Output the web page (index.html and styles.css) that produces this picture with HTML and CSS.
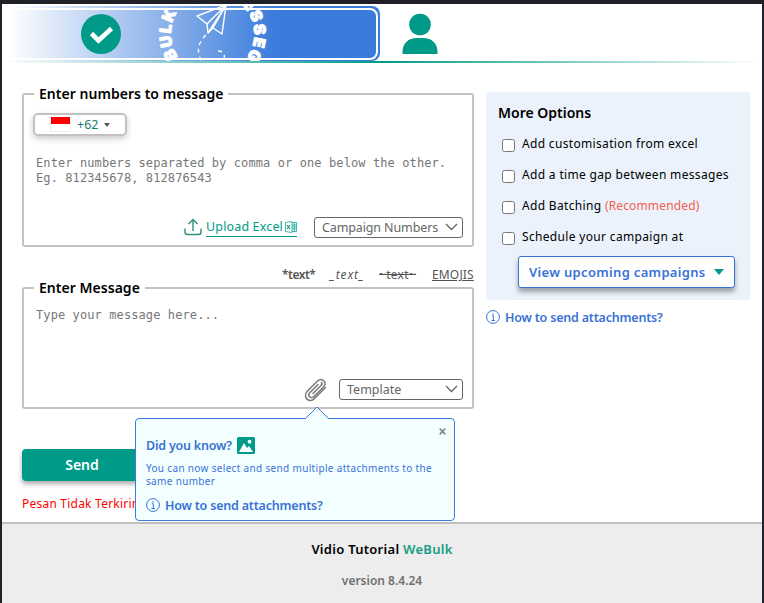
FILE: index.html
```html
<!DOCTYPE html>
<html lang="en">
<head>
<meta charset="utf-8">
<title>WeBulk</title>
<link rel="stylesheet" href="styles.css">
</head>
<body>
<div class="page">
  <header class="banner">
    <svg width="760" height="59" viewBox="2 4 760 59">
      <defs>
        <linearGradient id="blue" gradientUnits="userSpaceOnUse" x1="8" y1="0" x2="276" y2="0"><stop offset="0" stop-color="#fff"/><stop offset="1" stop-color="#3a7bdb"/></linearGradient>
        <linearGradient id="line" gradientUnits="userSpaceOnUse" x1="2" y1="0" x2="760" y2="0"><stop offset="0" stop-color="#009b88" stop-opacity="0"/><stop offset=".5" stop-color="#009b88"/><stop offset="1" stop-color="#009b88" stop-opacity="0"/></linearGradient>
        <clipPath id="clip"><rect x="2" y="6" width="378" height="55"/></clipPath>
        <path id="left" d="M178 57A41.500 41.500 0 0 1 190 -1"/>
        <path id="right" d="M241.600 4.300A41.500 41.500 0 0 1 235 69"/>
      </defs>
      <path d="M2 6H372a8 8 0 0 1 8 8V53a8 8 0 0 1-8 8H2z" fill="url(#blue)"/>
      <path d="M2 9H370a7 7 0 0 1 7 7V52a7 7 0 0 1-7 7H2" fill="none" stroke="#fff" stroke-width="2"/>
      <g clip-path="url(#clip)" fill="none" stroke="#fff" stroke-width="1.4" stroke-linejoin="round">
        <path d="M226 5L197 16L207 24L208 33L213 28L222 34Z"/>
        <path d="M226 5L207 24M226 5L208 33M226 5L213 28"/>
        <path d="M206 35Q192 48 204 65M218 51Q226 51 224 59" stroke-dasharray="4 4"/>
        <g class="ring-text"><text class="ring-left"><textPath href="#left">BULK</textPath></text><text class="ring-right"><textPath href="#right">ESSEG</textPath></text></g>
      </g>
      <circle cx="101" cy="34" r="20" fill="#009b88"/>
      <path d="M91.500 33.500L98.500 40.500L111.500 28.500" fill="none" stroke="#fff" stroke-width="4.600"/>
      <circle cx="420" cy="24.500" r="10.800" fill="#009b88"/>
      <path d="M402.500 54V52C402.500 43 409 38 416 38H424C431 38 437.500 43 437.500 52V54Z" fill="#009b88"/>
      <rect x="2" y="61" width="760" height="2" fill="url(#line)"/>
    </svg>
  </header>

  <main class="content">
    <div class="form">
      <fieldset class="box numbers">
        <legend class="strong">Enter numbers to message</legend>
        <button class="country"><span class="flag"></span><span class="code">+62</span><span class="caret"></span></button>
        <p class="entry entry-numbers">Enter numbers separated by comma or one below the other.<br>Eg. 812345678, 812876543</p>
        <div class="actions">
          <svg class="upload" width="18" height="18" viewBox="0 0 18 18" fill="none" stroke="#328e7d" stroke-width="1.400"><path d="M9 13V2M4.500 6L9 1.500L13.500 6M1 10.500V14Q1 16.500 3.500 16.500H14.500Q17 16.500 17 14V10.500"/></svg>
          <a class="upload-link"><span>Upload Excel</span><svg width="12" height="12" viewBox="0 0 12 12" fill="none" stroke="#009b88" stroke-width=".7"><path d="M.5 1.500L7 .5V11.500L.5 10.500ZM7 1.500H11.500V10.500H7M7 4H11.500M7 6H11.500M7 8H11.500M9.300 1.500V10.500"/><path stroke-width="1.100" d="M2 4L5 8M5 4L2 8"/></svg></a>
          <div class="select campaign"><span>Campaign Numbers</span><svg width="13" height="8" viewBox="0 0 13 8"><path d="M1 1L6.500 6.500L12 1"/></svg></div>
        </div>
      </fieldset>
      <div class="formats"><b>*text*</b><i>_text_</i><s>~text~</s><u>EMOJIS</u></div>
      <fieldset class="box message">
        <legend class="strong">Enter Message</legend>
        <p class="entry entry-message">Type your message here...</p>
        <div class="actions">
          <svg class="clip" width="23" height="24" viewBox="0 0 23 24" fill="none" stroke="#777" stroke-width="1.500" stroke-linecap="round"><path d="M21.500 9.500L10.500 20.500C7 24 2 22.500 1.500 18C1.300 16 2 14.500 3.500 13L13 3.500C15.500 1 18 .8 20 3C22 5 21 7.500 19 9.500L10 18.500C8.500 20 6.500 19.800 5.500 18.800C4.300 17.500 4.500 16 6 14.500L14 6.500M17.500 4.500C18.500 5.500 18 6.500 17 7.500L9 15.500"/></svg>
          <div class="select template"><span>Template</span><svg width="13" height="8" viewBox="0 0 13 8"><path d="M1 1L6.500 6.500L12 1"/></svg></div>
        </div>
      </fieldset>
      <button class="send">Send</button>
      <p class="failed">Pesan Tidak Terkirim</p>
      <div class="tip">
        <svg class="pointer" width="24" height="13" viewBox="0 0 24 13"><path d="M0 13L12 1L24 13" fill="#f3ffff" stroke="#3a7bdb"/></svg>
        <svg class="close" width="7" height="7" viewBox="0 0 7 7"><path d="M.7 .7L6.300 6.300M6.300 .7L.7 6.300" stroke="#888" stroke-width="1.700"/></svg>
        <h3><span>Did you know?</span><svg width="18" height="17" viewBox="0 0 18 17"><rect width="18" height="17" rx="1.500" fill="#009b88"/><circle cx="12.500" cy="4.700" r="1.900" fill="#fff"/><path d="M2 15L7 6L10 11L12 9L16 15Z" fill="#fff"/></svg></h3>
        <p>You can now select and send multiple attachments to the<br>same number</p>
        <a class="help"><svg width="14" height="14" viewBox="0 0 14 14"><circle cx="7" cy="7" r="6.400"/><path d="M5.800 5.700H7.300V10.500M5.500 10.500H9M7 3V4.500"/></svg><span>How to send attachments?</span></a>
      </div>
    </div>

    <aside class="side">
      <section class="options">
        <h2>More Options</h2>
        <label><input type="checkbox"><span>Add customisation from excel</span></label>
        <label><input type="checkbox"><span>Add a time gap between messages</span></label>
        <label><input type="checkbox"><span>Add Batching <em>(Recommended)</em></span></label>
        <label><input type="checkbox"><span>Schedule your campaign at</span></label>
        <button class="upcoming"><span>View upcoming campaigns</span><i></i></button>
      </section>
      <a class="help"><svg width="14" height="14" viewBox="0 0 14 14"><circle cx="7" cy="7" r="6.400"/><path d="M5.800 5.700H7.300V10.500M5.500 10.500H9M7 3V4.500"/></svg><span>How to send attachments?</span></a>
    </aside>
  </main>
  <footer class="footer"><p class="tutorial">Vidio Tutorial <span>WeBulk</span></p><p class="version">version 8.4.24</p></footer>
</div>
</body>
</html>
```
FILE: styles.css
```css
* { box-sizing: border-box; }
body { margin: 0; padding: 4px 2px 0; height: 603px; overflow: hidden; background: #202126; font-family: "Noto Sans", sans-serif; font-size: 12px; color: #000; }
p, h2, h3 { margin: 0; }
button { font-family: inherit; padding: 0; }
span { white-space: nowrap; }
.page { height: 599px; background: #fff; display: flex; flex-direction: column; }
.banner { height: 59px; flex: none; }
.banner svg { display: block; }
.ring-text { font: 900 16px Inter, sans-serif; fill: #fff; stroke: #fff; stroke-width: .9px; }
.ring-left { letter-spacing: 1.200px; }
.ring-right { letter-spacing: 1.500px; }
.content { height: 459px; flex: none; display: flex; gap: 12px; padding: 21px 12px 0 20px; }
.form { width: 452px; position: relative; }
.box { margin: 0; min-width: 0; border: 2px solid #c2c2c2; border-radius: 3px; padding: 0 9px 0 10px; }
.numbers { height: 163px; }
.message { height: 131px; margin-top: -7px; }
legend { height: 20px; line-height: 20px; padding: 0 5px; font-size: 14px; font-weight: 600; letter-spacing: .03px; }
.country { display: flex; align-items: center; width: 94px; height: 23px; margin: 9px 0 0 -1px; padding-left: 15px; background: #fff; border: 2px solid #c2c2c2; border-radius: 5px; box-shadow: 0 3px 6px #0003; }
.flag { width: 21px; height: 15px; border: 1px solid #eee; border-top: 0; background: linear-gradient(red 50%, #fff 50%); }
.code { margin-left: 6px; font-size: 12.500px; color: #16806f; }
.caret { margin-left: 6px; border: 3px solid transparent; border-top: 4px solid #555; border-bottom: 0; }
.entry { font: 12px/15px "DejaVu Sans Mono", monospace; letter-spacing: .1px; color: #777; margin-left: 2px; white-space: nowrap; }
.entry-numbers { margin-top: 20px; }
.entry-message { margin-top: 10px; height: 15px; }
.actions { display: flex; align-items: center; justify-content: flex-end; }
.numbers .actions { height: 22px; margin-top: 30px; }
.message .actions { height: 24px; margin-top: 54px; }
.upload { margin-right: 4px; }
.upload-link { display: flex; align-items: center; width: 91px; height: 19px; margin-right: 17px; border-bottom: 1px solid #009b88; color: #009b88; font-size: 12.500px; letter-spacing: .15px; }
.upload-link svg { margin-left: auto; }
.select { display: flex; align-items: center; justify-content: space-between; height: 21px; border: 1px solid #666; border-radius: 3px; padding: 0 4px 0 7px; font-size: 12.500px; color: #666; background: #fff; }
.select path { fill: none; stroke: #666; stroke-width: 1.300; }
.campaign { width: 149px; letter-spacing: -.12px; }
.template { width: 124px; }
.clip { margin-right: 12px; position: relative; top: 1px; }
.formats { height: 20px; margin-top: 18px; display: flex; justify-content: flex-end; gap: 15px; line-height: 20px; color: #555; }
.formats b { width: 33px; font-weight: 600; letter-spacing: -.5px; }
.formats i { width: 34px; letter-spacing: .9px; }
.formats s { width: 38px; letter-spacing: .3px; }
.formats u { width: 42px; letter-spacing: .15px; }
.send { display: block; width: 120px; height: 32px; margin-top: 40px; padding-bottom: 1px; background: #009b88; color: #fff; border: 0; border-radius: 4px; font-size: 14px; font-weight: 600; box-shadow: 0 3px 5px #0005; }
.failed { margin-top: 14px; line-height: 18px; color: red; white-space: nowrap; letter-spacing: .22px; }
.tip { position: absolute; left: 113px; top: 334px; width: 320px; height: 103px; border: 1px solid #3a7bdb; border-radius: 4px; background: #f3ffff; padding: 16px 10px 0; color: #3a72d6; }
.pointer { position: absolute; left: 169px; top: -13px; }
.close { position: absolute; right: 8px; top: 9px; }
.tip h3 { display: flex; align-items: center; gap: 5px; height: 20px; font-size: 12.500px; font-weight: 600; letter-spacing: -.22px; }
.tip p { margin-top: 7px; font-size: 10px; line-height: 13px; letter-spacing: .33px; white-space: nowrap; }
.tip .help { margin-top: 8px; }
.help { display: flex; align-items: center; gap: 5px; height: 18px; color: #3a72d6; font-size: 12.500px; font-weight: 600; letter-spacing: -.2px; }
.help path, .help circle { fill: none; stroke: #3a72d6; stroke-width: 1; }
.side { width: 264px; padding-top: 8px; }
.options { height: 208px; padding: 11px 12px 0; border-radius: 4px; background: #ebf2fb; }
h2 { height: 20px; line-height: 20px; font-size: 14px; font-weight: 600; margin-bottom: 6px; }
label { display: flex; height: 31px; padding: 5px 0 0 4px; line-height: 20px; letter-spacing: .33px; }
label input { width: 13px; height: 13px; margin: 5px 7px 0 0; }
label em { font-style: normal; color: #f55f50; letter-spacing: .15px; }
.upcoming { display: flex; align-items: center; justify-content: space-between; width: 217px; height: 32px; margin: 3px 0 0 20px; padding: 0 10px; background: #fff; color: #3a72d6; border: 1px solid #3a72d6; border-radius: 3px; font-size: 13px; font-weight: 600; letter-spacing: .32px; box-shadow: 0 4px 5px #0005; }
.upcoming i { border: 5px solid transparent; border-top: 6px solid #009b88; border-bottom: 0; }
.side .help { margin-top: 8px; }
.footer { flex: 1; border-top: 2px solid #bfbfbf; background: #ededed; text-align: center; padding-top: 15px; font-weight: 600; }
.footer p { height: 20px; line-height: 20px; }
.tutorial { font-size: 13px; letter-spacing: .28px; }
.tutorial span { color: #169b82; }
.footer .version { margin-top: 12px; color: #707070; }
```
